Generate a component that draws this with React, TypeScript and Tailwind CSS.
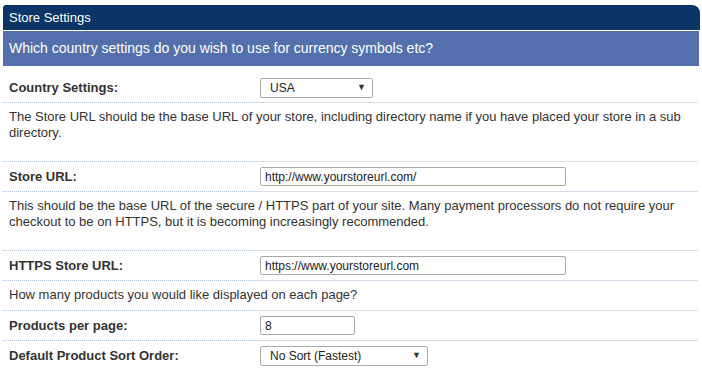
import React from "react";

type Field =
  | { kind: "note"; text: string; tall?: boolean }
  | { kind: "select"; label: string; value: string; width: string }
  | { kind: "input"; label: string; value: string; width: string };

const fields: Field[] = [
  { kind: "select", label: "Country Settings:", value: "USA", width: "w-[113px]" },
  {
    kind: "note",
    tall: true,
    text: "The Store URL should be the base URL of your store, including directory name if you have placed your store in a sub directory.",
  },
  { kind: "input", label: "Store URL:", value: "http://www.yourstoreurl.com/", width: "w-[306px]" },
  {
    kind: "note",
    tall: true,
    text: "This should be the base URL of the secure / HTTPS part of your site. Many payment processors do not require your checkout to be on HTTPS, but it is becoming increasingly recommended.",
  },
  { kind: "input", label: "HTTPS Store URL:", value: "https://www.yourstoreurl.com", width: "w-[306px]" },
  { kind: "note", text: "How many products you would like displayed on each page?" },
  { kind: "input", label: "Products per page:", value: "8", width: "w-[95px]" },
  { kind: "select", label: "Default Product Sort Order:", value: "No Sort (Fastest)", width: "w-[168px]" },
];

function Divider() {
  return (
    <div className="flex">
      <div className="w-[250px] border-b border-dotted border-[#b4c6dc]" />
      <div className="flex-1 border-b border-[#d3deea]" />
    </div>
  );
}

function Control({ field }: { field: Field }) {
  if (field.kind === "select") {
    return (
      <div
        className={`${field.width} h-[20px] flex items-center justify-between pl-[9px] pr-[6px] bg-white border border-[#a9a9a9] rounded-[2px] text-[12px] text-[#222]`}
      >
        <span>{field.value}</span>
        <span className="text-[9px] text-[#333]">▼</span>
      </div>
    );
  }
  if (field.kind === "input") {
    return (
      <div
        className={`${field.width} h-[19px] flex items-center px-[4px] bg-white border border-[#a9a9a9] rounded-[2px] text-[12px] text-[#222]`}
      >
        {field.value}
      </div>
    );
  }
  return null;
}

export default function App() {
  return (
    <div className="w-[702px] h-[369px] overflow-hidden bg-white pt-[5px] pl-[3px] font-['Liberation_Sans',Arial,sans-serif] text-[13px] text-[#333]">
      <div className="w-[697px]">
        {/* panel title */}
        <div className="h-[25px] flex items-center px-[6px] bg-[#0b3567] text-white text-[13px] rounded-tl-[3px] rounded-tr-[8px]">
          Store Settings
        </div>

        {/* question bar */}
        <div className="mt-px mr-[1px] h-[35px] flex items-center px-[6px] bg-[#5370ad] text-white text-[14px]">
          Which country settings do you wish to use for currency symbols etc?
        </div>

        {/* settings rows */}
        <div className="mt-[7px] mr-[2px]">
          {fields.map((f, i) => (
            <div key={i}>
              {f.kind === "note" ? (
                <div className={`px-[6px] pt-[6px] leading-[16px] ${f.tall ? "pb-[20px]" : "pb-[7px]"}`}>
                  {f.text}
                </div>
              ) : (
                <div className="flex items-center h-[29px]">
                  <div className="w-[250px] pl-[6px] font-bold">{f.label}</div>
                  <div className="pl-[7px]">
                    <Control field={f} />
                  </div>
                </div>
              )}
              {i < fields.length - 1 && <Divider />}
            </div>
          ))}
        </div>
      </div>
    </div>
  );
}
